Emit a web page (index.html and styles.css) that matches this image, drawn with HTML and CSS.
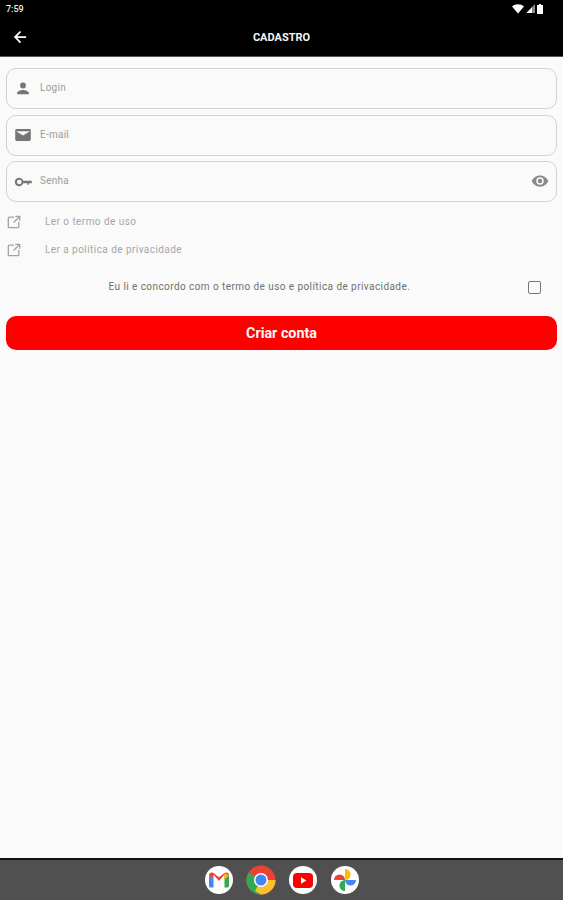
FILE: index.html
```html
<!DOCTYPE html>
<html lang="pt">
<head>
<meta charset="utf-8">
<title>Cadastro</title>
<link rel="stylesheet" href="styles.css">
</head>
<body>
<div class="screen">
  <header class="top">
    <div class="status">
      <span class="clock">7:59</span>
      <span class="sys">
        <svg width="12" height="10" viewBox="0 0 12 10"><path d="M0 2.600C3.400-.5 8.600-.5 12 2.600L6 9.600z" fill="#fff"/></svg>
        <svg width="9" height="9" viewBox="0 0 9 9"><path d="M9 0V9H0z" fill="#8a8a8a"/><path d="M6 3.200V9H0.800z" fill="#fff"/></svg>
        <svg width="6" height="10" viewBox="0 0 6 10"><path d="M2 0H4V1H6V10H0V1H2z" fill="#fff"/></svg>
      </span>
    </div>
    <div class="appbar">
      <svg class="back" width="14" height="14" viewBox="0 0 16 16"><path d="M15 7H4.800l4.500-4.600L7.900 1 1 8l6.900 7 1.400-1.400L4.800 9H15z" fill="#fff"/></svg>
      <h1 class="title">CADASTRO</h1>
    </div>
  </header>

  <main class="content">
    <div class="field">
      <svg class="ficon" width="24" height="24" viewBox="0 0 24 24"><path d="M12 12a4 4 0 1 0 0-8 4 4 0 0 0 0 8zm0 2c-2.700 0-8 1.300-8 4v2h16v-2c0-2.700-5.300-4-8-4z" fill="#757575" transform="translate(2.400 1.800) scale(.8)"/></svg>
      <span class="hint">Login</span>
    </div>
    <div class="field">
      <svg class="ficon" width="24" height="24" viewBox="0 0 24 24"><path d="M5 5.500h14a1.500 1.500 0 0 1 1.500 1.500v10a1.500 1.500 0 0 1-1.500 1.500H5A1.500 1.500 0 0 1 3.500 17V7A1.500 1.500 0 0 1 5 5.500zm7 7L19.500 8h-15z" fill="#757575" fill-rule="evenodd"/></svg>
      <span class="hint">E-mail</span>
    </div>
    <div class="field">
      <svg class="ficon" width="24" height="24" viewBox="0 0 24 24"><path d="M12 10.500A5.500 5.500 0 1 0 12 13.500H17.500v2h2v-2H23v-3zM7 15a3 3 0 1 1 0-6 3 3 0 0 1 0 6z" fill="#757575" transform="translate(2 1.800) scale(.85)"/></svg>
      <span class="hint">Senha</span>
      <svg class="eye" width="18" height="18" viewBox="0 0 24 24"><path d="M12 4.500C7 4.500 2.700 7.600 1 12c1.700 4.400 6 7.500 11 7.500s9.300-3.100 11-7.500c-1.700-4.400-6-7.500-11-7.500zM12 17a5 5 0 1 1 0-10 5 5 0 0 1 0 10zm0-8a3 3 0 1 0 0 6 3 3 0 0 0 0-6z" fill="#8a8a8a" fill-rule="evenodd"/></svg>
    </div>

    <div class="links">
      <a class="link">
        <svg width="14" height="14" viewBox="0 0 16 16"><path d="M8 2.500H2.500a1 1 0 0 0-1 1v10a1 1 0 0 0 1 1h10a1 1 0 0 0 1-1V8M9.500 1.500h5v5M14 2L7.500 8.500" fill="none" stroke="#a3a3a3" stroke-width="1.500"/></svg>
        <span>Ler o termo de uso</span>
      </a>
      <a class="link">
        <svg width="14" height="14" viewBox="0 0 16 16"><path d="M8 2.500H2.500a1 1 0 0 0-1 1v10a1 1 0 0 0 1 1h10a1 1 0 0 0 1-1V8M9.500 1.500h5v5M14 2L7.500 8.500" fill="none" stroke="#a3a3a3" stroke-width="1.500"/></svg>
        <span>Ler a política de privacidade</span>
      </a>
    </div>

    <div class="agree">
      <span class="agree-text">Eu li e concordo com o termo de uso e política de privacidade.</span>
      <span class="check"></span>
    </div>

    <button class="submit">Criar conta</button>
  </main>

  <footer class="dock">
    <span class="app">
      <svg width="20" height="16" viewBox="0 0 20 16"><path d="M0 3.500V14a1.500 1.500 0 0 0 1.500 1.500H4.500V7z" fill="#4285f4"/><path d="M15.500 15.500h3A1.500 1.500 0 0 0 20 14V3.500L15.500 7z" fill="#34a853"/><path d="M0 3.500C0 1 2.500-.5 4.500 1L10 5.300 15.500 1C17.500-.5 20 1 20 3.500L15.500 7V2.500L10 9 4.500 2.500V7z" fill="#ea4335"/><path d="M15.500 1.100L20 3.500 15.500 7z" fill="#fbbc04"/></svg>
    </span>
    <span class="app app-chrome">
      <svg width="30" height="30" viewBox="0 0 30 30"><circle cx="15" cy="15" r="14.500" fill="#ea4335"/><path d="M15 15L2.400 7.700A14.500 14.500 0 0 0 15 29.500z" fill="#34a853"/><path d="M15 15h14.500A14.500 14.500 0 0 1 15 29.500L9 26z" fill="#fbc02d"/><circle cx="15" cy="15" r="7" fill="#fff"/><circle cx="15" cy="15" r="5.500" fill="#4285f4"/></svg>
    </span>
    <span class="app">
      <svg width="20" height="15" viewBox="0 0 20 15"><rect width="20" height="15" rx="4" fill="#f00"/><path d="M8 4.200v6.600l5.500-3.300z" fill="#fff"/></svg>
    </span>
    <span class="app">
      <svg width="22" height="22" viewBox="0 0 22 22"><path d="M11 11V0a5.500 5.500 0 0 1 0 11z" fill="#fbbc04"/><path d="M11 11h11a5.500 5.500 0 0 1-11 0z" fill="#4285f4"/><path d="M11 11v11a5.500 5.500 0 0 1 0-11z" fill="#34a853"/><path d="M11 11H0a5.500 5.500 0 0 1 11 0z" fill="#ea4335"/></svg>
    </span>
  </footer>
</div>
</body>
</html>
```
FILE: styles.css
```css
* { box-sizing: border-box; }
html, body { margin: 0; padding: 0; }
body { font-family: Roboto, "Liberation Sans", sans-serif; }
.screen {
  width: 563px;
  height: 900px;
  display: flex;
  flex-direction: column;
  background: #fafafa;
  overflow: hidden;
}
.top {
  height: 57px;
  flex: none;
  background: #000;
  color: #fff;
  border-bottom: 1px solid #555;
}
.status {
  height: 18px;
  display: flex;
  justify-content: space-between;
  align-items: center;
  padding: 0 20px 1px 6px;
}
.clock { font-size: 9px; font-weight: 500; color: #eee; }
.sys { display: flex; align-items: center; gap: 2px; }
.sys svg { display: block; }
.appbar {
  height: 38px;
  position: relative;
  display: flex;
  align-items: center;
  justify-content: center;
}
.back { position: absolute; left: 13px; top: 12px; }
.title {
  margin: 0;
  font-size: 11px;
  font-weight: 700;
  color: #f5f5f5;
}
.content {
  flex: 1;
  padding: 11px 6px 0 6px;
  display: flex;
  flex-direction: column;
}
.field {
  height: 41px;
  margin-bottom: 5.500px;
  border: 1.500px solid #d2d2d2;
  border-radius: 10px;
  display: flex;
  align-items: center;
  padding: 0 7px 0 5px;
  gap: 6px;
}
.ficon { flex: none; width: 22px; height: 22px; }
.hint { font-size: 10px; color: #9c9c9c; flex: 1; margin-bottom: 2px; letter-spacing: .25px; }
.eye { flex: none; margin-bottom: 2px; }
.links { display: flex; flex-direction: column; }
.link {
  height: 28px;
  display: flex;
  align-items: center;
  padding-left: 1px;
  gap: 24px;
  font-size: 10px;
  letter-spacing: .44px;
  color: #a6a6a6;
}
.agree {
  height: 34px;
  margin-top: 6px;
  position: relative;
  display: flex;
  align-items: center;
}
.agree-text {
  margin-left: 102.500px;
  font-size: 10px;
  letter-spacing: .43px;
  color: #707070;
}
.check {
  position: absolute;
  left: 522px;
  top: 11px;
  width: 13px;
  height: 13px;
  border: 1.500px solid #777;
  border-radius: 2px;
}
.submit {
  height: 34px;
  margin: 12px 0 0 0;
  border: 0;
  border-radius: 10px;
  background: #f00;
  color: #f7f7f7;
  font: 700 14.300px Roboto, "Liberation Sans", sans-serif;
  padding: 0;
}
.dock {
  height: 42px;
  flex: none;
  background: #505050;
  border-top: 2px solid #111;
  display: flex;
  justify-content: center;
  align-items: center;
  gap: 14px;
}
.app {
  width: 28px;
  height: 28px;
  border-radius: 50%;
  background: #fff;
  display: flex;
  align-items: center;
  justify-content: center;
}
.app-chrome { background: none; }
.app svg { display: block; flex: none; }
```
